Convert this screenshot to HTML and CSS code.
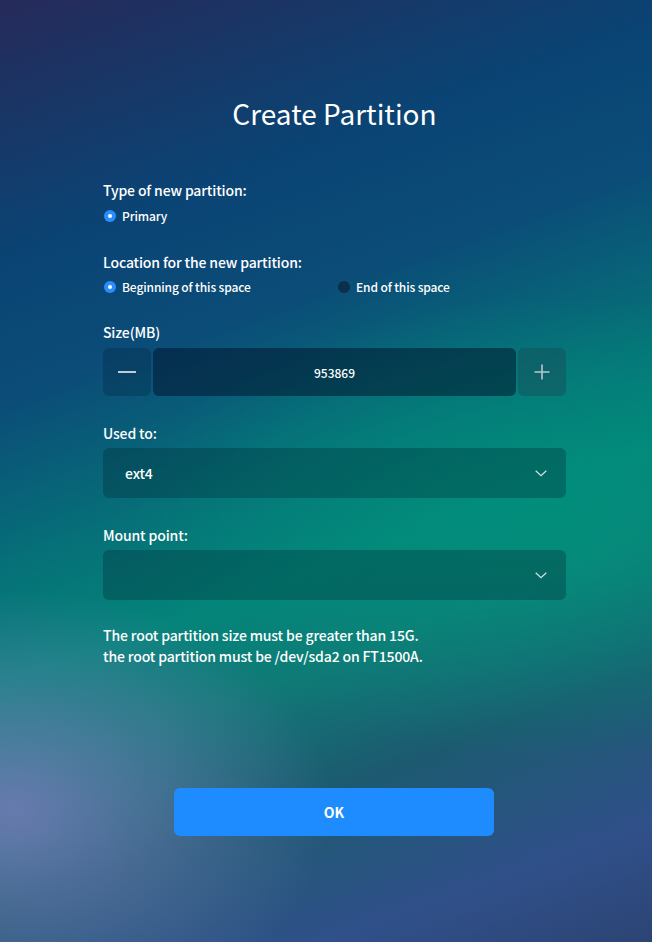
FILE: index.html
```html
<!DOCTYPE html>
<html lang="en">
<head>
<meta charset="utf-8">
<title>Create Partition</title>
<link rel="stylesheet" href="styles.css">
</head>
<body>
<div class="page">
  <main class="dialog">
    <h1 class="title">Create Partition</h1>

    <section class="group group-type">
      <div class="label">Type of new partition:</div>
      <div class="radios">
        <label class="radio"><span class="dot checked"></span><span>Primary</span></label>
      </div>
    </section>

    <section class="group group-loc">
      <div class="label">Location for the new partition:</div>
      <div class="radios two">
        <label class="radio"><span class="dot checked"></span><span>Beginning of this space</span></label>
        <label class="radio"><span class="dot"></span><span>End of this space</span></label>
      </div>
    </section>

    <section class="group group-size">
      <div class="label">Size(MB)</div>
      <div class="spin">
        <button class="spin-btn minus" type="button" aria-label="decrease">
          <svg width="18" height="2" viewBox="0 0 18 2"><rect width="18" height="2" fill="#c3ccd6"/></svg>
        </button>
        <div class="spin-value">953869</div>
        <button class="spin-btn plus" type="button" aria-label="increase">
          <svg width="16" height="16" viewBox="0 0 16 16"><path d="M8 0.5V15.5M0.5 8H15.5" stroke="#b9c6cc" stroke-width="1.6"/></svg>
        </button>
      </div>
    </section>

    <section class="group group-used">
      <div class="label">Used to:</div>
      <div class="combo">
        <span class="combo-text">ext4</span>
        <svg class="chev" width="12" height="7" viewBox="0 0 12 7"><path d="M0.7 0.7L6 5.6L11.3 0.7" fill="none" stroke="#d6e4e4" stroke-width="1.2"/></svg>
      </div>
    </section>

    <section class="group group-mount">
      <div class="label">Mount point:</div>
      <div class="combo">
        <span class="combo-text"></span>
        <svg class="chev" width="12" height="7" viewBox="0 0 12 7"><path d="M0.7 0.7L6 5.6L11.3 0.7" fill="none" stroke="#d6e4e4" stroke-width="1.2"/></svg>
      </div>
    </section>

    <p class="hint">The root partition size must be greater than 15G.<br>the root partition must be /dev/sda2 on FT1500A.</p>

    <div class="actions">
      <button class="ok" type="button">OK</button>
    </div>
  </main>
</div>
</body>
</html>
```

FILE: styles.css
```css
html, body {
  margin: 0;
  padding: 0;
  width: 652px;
  height: 942px;
  overflow: hidden;
}

body {
  font-family: "Noto Sans CJK SC", "Noto Sans", sans-serif;
  color: #ffffff;
  background:
    radial-gradient(ellipse 320px 220px at 2% 86%, rgba(118, 124, 184, 0.85), rgba(118, 124, 184, 0) 100%),
    radial-gradient(ellipse 420px 230px at 85% 56%, rgba(0, 146, 124, 0.75), rgba(0, 146, 124, 0) 100%),
    linear-gradient(160deg, #262a5a 0%, #0a4474 22%, #0b4c78 34%, #067078 48%, #04847a 58%, #0f7a76 66%, #1c5a70 77%, #30508a 90%, #2c4474 100%);
}

.page {
  width: 652px;
  height: 942px;
}

.dialog {
  width: 463px;
  margin-left: 103px;
  padding-top: 93px;
  display: flex;
  flex-direction: column;
}

.title {
  margin: 0;
  font-size: 28px;
  font-weight: 400;
  line-height: 40px;
  text-align: center;
  letter-spacing: 0;
}

.group {
  display: flex;
  flex-direction: column;
}

.label {
  font-size: 14px;
  font-weight: 500;
  letter-spacing: -0.14px;
  line-height: 20px;
}

.group-type { margin-top: 47px; }
.group-loc { margin-top: 26px; }
.group-size { margin-top: 25px; }
.group-used { margin-top: 27px; }
.group-mount { margin-top: 27px; }

.radios {
  margin-top: 6px;
  display: flex;
}

.group-loc .radios { margin-top: 5px; }

.radios.two {
  display: grid;
  grid-template-columns: 234px 1fr;
}

.radio {
  display: flex;
  align-items: center;
  gap: 6px;
  font-size: 12px;
  font-weight: 500;
  letter-spacing: -0.13px;
  line-height: 20px;
  padding-left: 1px;
}

.dot {
  width: 12px;
  height: 12px;
  border-radius: 50%;
  background: #0c2f4a;
  box-sizing: border-box;
  flex: none;
}

.dot.checked {
  background: #2b8cff;
  position: relative;
}

.dot.checked::after {
  content: "";
  position: absolute;
  left: 4px;
  top: 4px;
  width: 4px;
  height: 4px;
  border-radius: 50%;
  background: #ffffff;
}

.spin {
  margin-top: 6px;
  display: flex;
  gap: 2px;
  height: 48px;
}

.spin-btn {
  width: 48px;
  height: 48px;
  border: none;
  border-radius: 6px;
  padding: 0;
  display: flex;
  align-items: center;
  justify-content: center;
  background: rgba(0, 20, 40, 0.22);
  flex: none;
}

.spin-btn.plus {
  background: rgba(20, 80, 90, 0.5);
}

.spin-value {
  flex: 1;
  border-radius: 6px;
  background: rgba(0, 15, 40, 0.5);
  display: flex;
  align-items: center;
  justify-content: center;
  font-size: 12px;
  font-weight: 500;
}

.combo {
  margin-top: 5px;
  height: 50px;
  border-radius: 6px;
  background: rgba(0, 40, 50, 0.32);
  display: flex;
  align-items: center;
  justify-content: space-between;
  padding: 0 19px 0 22px;
}

.combo-text {
  font-size: 14px;
  font-weight: 500;
  letter-spacing: -0.14px;
}

.hint {
  margin: 25px 0 0 0;
  font-size: 14px;
  font-weight: 500;
  letter-spacing: -0.14px;
  line-height: 21px;
}

.actions {
  margin-top: 121px;
  display: flex;
  justify-content: flex-start;
  padding-left: 71px;
}

.ok {
  width: 320px;
  height: 48px;
  border: none;
  border-radius: 6px;
  background: #1e8cff;
  color: #ffffff;
  font-family: "Noto Sans CJK SC", "Noto Sans", sans-serif;
  font-size: 14px;
  font-weight: 700;
}
```
